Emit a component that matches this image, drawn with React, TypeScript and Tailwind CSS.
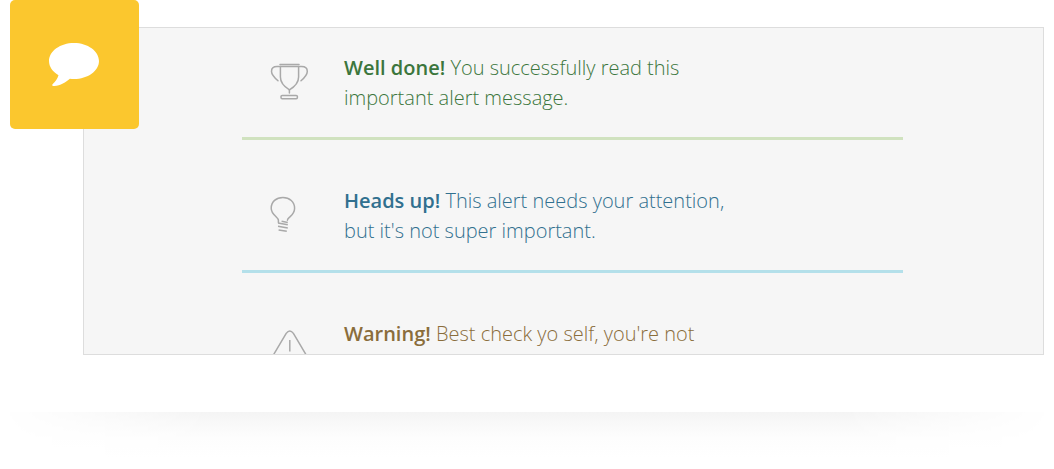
import type { ReactNode } from "react";

function LineIcon({ children }: { children: ReactNode }) {
  return (
    <svg
      viewBox="0 0 40 40"
      className="h-10 w-10 shrink-0"
      fill="none"
      stroke="#a9a9a9"
      strokeWidth="1.5"
      strokeLinecap="round"
      strokeLinejoin="round"
      aria-hidden="true"
    >
      {children}
    </svg>
  );
}

function Trophy() {
  return (
    <LineIcon>
      <path d="M11 2.5H30" />
      <path d="M9 18.8C4.6 14.8 2.5 12.4 2.5 9.4C2.5 6.4 4.4 4.6 8 4.6H32.6C36.4 4.6 38.3 6.4 38.3 9.4C38.3 12.4 36 15.2 32 18.8" />
      <path d="M11.4 4.6V15C11.4 21 14.4 24.2 20.4 27.8C26.6 24.2 29.6 21 29.6 15V4.6" />
      <path d="M20.4 27.8V31" />
      <rect x="12" y="33.4" width="16.4" height="3.4" rx="1.2" />
    </LineIcon>
  );
}

function Bulb() {
  return (
    <LineIcon>
      <path d="M9.4 27.4V25.2C9.4 23.8 8 22.6 6.6 21.2C4 18.8 2.2 16.4 2.2 13.2C2.2 6.8 7.2 2.4 13.9 2.4C20.6 2.4 25.6 7 25.6 13.2C25.6 17 23.8 19.2 21.2 21.6C19.6 23 18.4 23.8 18.4 25.2" />
      <g strokeLinecap="butt">
        <path d="M12.6 26.2L18.8 27.4" />
        <path d="M9 27.9L18.8 29.7M9 31.3L18.8 33.1M9.6 34.9L17.8 36.3" />
      </g>
    </LineIcon>
  );
}

function Warning() {
  return (
    <LineIcon>
      <path d="M17.2 5.4Q20.8 .6 24.4 5.4L39 30Q41 35 36 35H5Q0 35 2.6 30Z" />
      <path d="M20.8 12V23.6M20.8 26V27.8" strokeLinecap="butt" />
    </LineIcon>
  );
}

type AlertProps = {
  icon: ReactNode;
  title: string;
  message: string;
  className: string;
};

const alerts: AlertProps[] = [
  {
    icon: <Trophy />,
    title: "Well done!",
    message: "You successfully read this important alert message.",
    className: "border-[#d0e2bf] text-[#3c763d]",
  },
  {
    icon: <Bulb />,
    title: "Heads up!",
    message: "This alert needs your attention, but it's not super important.",
    className: "border-[#b4e0ea] text-[#31708f]",
  },
  {
    icon: <Warning />,
    title: "Warning!",
    message: "Best check yo self, you're not",
    className: "border-[#f3dfb8] text-[#8a6d3b]",
  },
];

function Alert({ icon, title, message, className }: AlertProps) {
  return (
    <div
      role="alert"
      className={`mb-[21px] flex gap-[35px] border-b-[3px] pt-[25px] pb-6 pl-[27px] ${className}`}
    >
      <div className="pt-[9px]">{icon}</div>
      <p className="max-w-[400px] text-[20px] leading-[30px] font-light">
        <strong className="font-semibold">{title}</strong> {message}
      </p>
    </div>
  );
}

export default function App() {
  return (
    <main className="bg-white font-['Open_Sans',sans-serif]">
      <section className="relative pt-[27px] pr-[10px] pl-[83px]">
        <div className="absolute top-0 left-[10px] h-[129px] w-[129px] rounded-[5px] bg-[#fbc72e] px-[39px] pt-[43px]">
          <svg viewBox="0 0 50 44" className="h-11 w-[50px]" fill="#ffffff" aria-hidden="true">
            <path d="M25 0C38.8 0 50 8.1 50 18.1S38.8 36.1 25 36.1C23.6 36.1 22.2 36 20.9 35.8C16.8 39.5 11.5 42.5 5.3 43C3.2 43.2 2.6 42 4 40.7C6.4 38.4 8.5 35.9 9.5 32.2C3.7 28.9 0 23.8 0 18.1C0 8.1 11.2 0 25 0Z" />
          </svg>
        </div>
        <div className="h-[328px] overflow-hidden border border-[#dddddd] bg-[#f6f6f6] pr-[140px] pl-[158px]">
          {alerts.map((alert) => (
            <Alert key={alert.title} {...alert} />
          ))}
        </div>
      </section>
      <div className="mt-[57px] h-[57px] bg-[linear-gradient(to_bottom,#f4f4f4_0,#f8f8f8_10px,#fdfdfd_26px,#ffffff_46px)] [mask-image:linear-gradient(to_right,transparent,#000_20%,#000_80%,transparent)]" />
    </main>
  );
}
